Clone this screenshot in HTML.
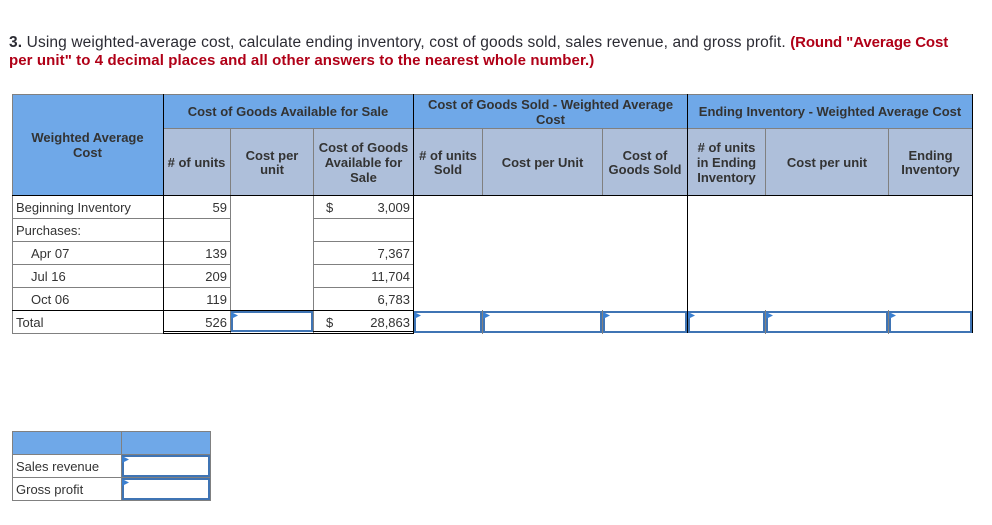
<!DOCTYPE html>
<html><head><meta charset="utf-8"><style>
html,body{margin:0;padding:0;background:#fff}
#p{position:relative;width:992px;height:525px;overflow:hidden;background:#fff;font-family:"Liberation Sans",Arial,sans-serif;color:#333}
#p div{position:absolute;box-sizing:border-box}
.h{white-space:nowrap;font-size:15.5px;line-height:18px;color:#2b2b33;left:9px}
.nn{letter-spacing:.13px}
.r{color:#b00017;font-weight:bold;font-size:15px}
.t{white-space:nowrap;font-size:13px;line-height:15px;height:15px}
.b{font-weight:bold;text-align:center;color:#333}
.n{text-align:right}
.g{background:#808080}
.k{background:#000}
.i{border:2px solid #3f74b4;background:#fff}
.a{width:7px;height:7px;background:#3a7fd0;clip-path:polygon(0 0,100% 50%,0 100%)}
</style></head><body><div id="p">
<div class="h" style="top:34px"><span class="nn"><b>3.</b> Using weighted-average cost, calculate ending inventory, cost of goods sold, sales revenue, and gross profit. </span><span class="r" style="letter-spacing:-.1px">(Round "Average Cost</span></div>
<div class="h r" style="top:52px;letter-spacing:.09px">per unit" to 4 decimal places and all other answers to the nearest whole number.)</div>

<div style="left:12px;top:94px;width:960px;height:34px;background:#6fa8e8"></div>
<div style="left:12px;top:128px;width:151px;height:67px;background:#6fa8e8"></div>
<div style="left:163px;top:128px;width:809px;height:67px;background:#aebfda"></div>

<!-- grey horizontals -->
<div class="g" style="left:12px;top:94px;width:960px;height:1px"></div>
<div class="g" style="left:163px;top:128px;width:809px;height:1px"></div>
<div class="g" style="left:12px;top:218px;width:218px;height:1px"></div>
<div class="g" style="left:313px;top:218px;width:100px;height:1px"></div>
<div class="g" style="left:12px;top:241px;width:218px;height:1px"></div>
<div class="g" style="left:313px;top:241px;width:100px;height:1px"></div>
<div class="g" style="left:12px;top:264px;width:218px;height:1px"></div>
<div class="g" style="left:313px;top:264px;width:100px;height:1px"></div>
<div class="g" style="left:12px;top:287px;width:218px;height:1px"></div>
<div class="g" style="left:313px;top:287px;width:100px;height:1px"></div>
<div class="g" style="left:12px;top:333px;width:151px;height:1px"></div>

<!-- grey verticals -->
<div class="g" style="left:12px;top:94px;width:1px;height:240px"></div>
<div class="g" style="left:230px;top:128px;width:1px;height:206px"></div>
<div class="g" style="left:313px;top:128px;width:1px;height:206px"></div>
<div class="g" style="left:482px;top:128px;width:1px;height:67px"></div>
<div class="g" style="left:602px;top:128px;width:1px;height:67px"></div>
<div class="g" style="left:765px;top:128px;width:1px;height:67px"></div>
<div class="g" style="left:888px;top:128px;width:1px;height:67px"></div>

<!-- black lines -->
<div class="k" style="left:12px;top:195px;width:960px;height:1px"></div>
<div class="k" style="left:163px;top:94px;width:1px;height:240px"></div>
<div class="k" style="left:413px;top:94px;width:1px;height:240px"></div>
<div class="k" style="left:687px;top:94px;width:1px;height:239px"></div>
<div class="k" style="left:972px;top:94px;width:1px;height:239px"></div>
<div class="k" style="left:12px;top:310px;width:401px;height:1px"></div>
<div class="k" style="left:163px;top:331px;width:250px;height:1px"></div>
<div class="k" style="left:163px;top:333px;width:250px;height:1px"></div>

<!-- header text -->
<div class="t b" style="left:12px;width:151px;top:130px">Weighted Average</div>
<div class="t b" style="left:12px;width:151px;top:145px">Cost</div>
<div class="t b" style="left:163px;width:250px;top:104px">Cost of Goods Available for Sale</div>
<div class="t b" style="left:414px;width:273px;top:97px">Cost of Goods Sold - Weighted Average</div>
<div class="t b" style="left:414px;width:273px;top:112px">Cost</div>
<div class="t b" style="left:688px;width:284px;top:104px">Ending Inventory - Weighted Average Cost</div>

<div class="t b" style="left:163px;width:67px;top:155px">#&nbsp;of units</div>
<div class="t b" style="left:231px;width:82px;top:148px">Cost per</div>
<div class="t b" style="left:231px;width:82px;top:162px">unit</div>
<div class="t b" style="left:314px;width:99px;top:140px">Cost of Goods</div>
<div class="t b" style="left:314px;width:99px;top:155px">Available for</div>
<div class="t b" style="left:314px;width:99px;top:170px">Sale</div>
<div class="t b" style="left:414px;width:68px;top:148px">#&nbsp;of units</div>
<div class="t b" style="left:414px;width:68px;top:162px">Sold</div>
<div class="t b" style="left:483px;width:119px;top:155px">Cost per Unit</div>
<div class="t b" style="left:603px;width:84px;top:148px">Cost of</div>
<div class="t b" style="left:603px;width:84px;top:162px">Goods Sold</div>
<div class="t b" style="left:688px;width:77px;top:140px">#&nbsp;of units</div>
<div class="t b" style="left:688px;width:77px;top:155px">in Ending</div>
<div class="t b" style="left:688px;width:77px;top:170px">Inventory</div>
<div class="t b" style="left:766px;width:122px;top:155px">Cost per unit</div>
<div class="t b" style="left:889px;width:83px;top:148px">Ending</div>
<div class="t b" style="left:889px;width:83px;top:162px">Inventory</div>

<!-- row labels -->
<div class="t" style="left:16px;top:200px">Beginning Inventory</div>
<div class="t" style="left:16px;top:223px">Purchases:</div>
<div class="t" style="left:31px;top:246px">Apr 07</div>
<div class="t" style="left:31px;top:269px">Jul 16</div>
<div class="t" style="left:31px;top:292px">Oct 06</div>
<div class="t" style="left:16px;top:315px">Total</div>

<!-- units -->
<div class="t n" style="left:170px;width:57px;top:200px">59</div>
<div class="t n" style="left:170px;width:57px;top:246px">139</div>
<div class="t n" style="left:170px;width:57px;top:269px">209</div>
<div class="t n" style="left:170px;width:57px;top:292px">119</div>
<div class="t n" style="left:170px;width:57px;top:315px">526</div>

<!-- values -->
<div class="t" style="left:326px;top:200px">$</div>
<div class="t n" style="left:340px;width:70px;top:200px">3,009</div>
<div class="t n" style="left:340px;width:70px;top:246px">7,367</div>
<div class="t n" style="left:340px;width:70px;top:269px">11,704</div>
<div class="t n" style="left:340px;width:70px;top:292px">6,783</div>
<div class="t" style="left:326px;top:315px">$</div>
<div class="t n" style="left:340px;width:70px;top:315px">28,863</div>

<!-- input cells -->
<div class="i" style="left:231px;top:311px;width:82px;height:21px"></div><div class="a" style="left:231px;top:312px"></div>
<div class="i" style="left:414px;top:311px;width:68px;height:22px"></div><div class="a" style="left:414px;top:312px"></div>
<div class="i" style="left:483px;top:311px;width:119px;height:22px"></div><div class="a" style="left:483px;top:312px"></div>
<div class="i" style="left:603px;top:311px;width:84px;height:22px"></div><div class="a" style="left:603px;top:312px"></div>
<div class="i" style="left:688px;top:311px;width:77px;height:22px"></div><div class="a" style="left:688px;top:312px"></div>
<div class="i" style="left:766px;top:311px;width:122px;height:22px"></div><div class="a" style="left:766px;top:312px"></div>
<div class="i" style="left:889px;top:311px;width:83px;height:22px"></div><div class="a" style="left:889px;top:312px"></div>
<div class="g" style="left:482px;top:310px;width:1px;height:24px"></div>
<div class="g" style="left:602px;top:310px;width:1px;height:24px"></div>
<div class="g" style="left:765px;top:310px;width:1px;height:24px"></div>
<div class="g" style="left:888px;top:310px;width:1px;height:24px"></div>

<!-- small table -->
<div style="left:12px;top:431px;width:199px;height:23px;background:#6fa8e8"></div>
<div class="g" style="left:12px;top:431px;width:199px;height:1px"></div>
<div class="g" style="left:12px;top:454px;width:199px;height:1px"></div>
<div class="g" style="left:12px;top:477px;width:199px;height:1px"></div>
<div class="g" style="left:12px;top:500px;width:199px;height:1px"></div>
<div class="g" style="left:12px;top:431px;width:1px;height:70px"></div>
<div class="g" style="left:121px;top:431px;width:1px;height:70px"></div>
<div class="g" style="left:210px;top:431px;width:1px;height:70px"></div>
<div class="t" style="left:16px;top:459px">Sales revenue</div>
<div class="t" style="left:16px;top:482px">Gross profit</div>
<div class="i" style="left:122px;top:455px;width:88px;height:22px"></div><div class="a" style="left:122px;top:456px"></div>
<div class="i" style="left:122px;top:478px;width:88px;height:22px"></div><div class="a" style="left:122px;top:479px"></div>
</div></body></html>
